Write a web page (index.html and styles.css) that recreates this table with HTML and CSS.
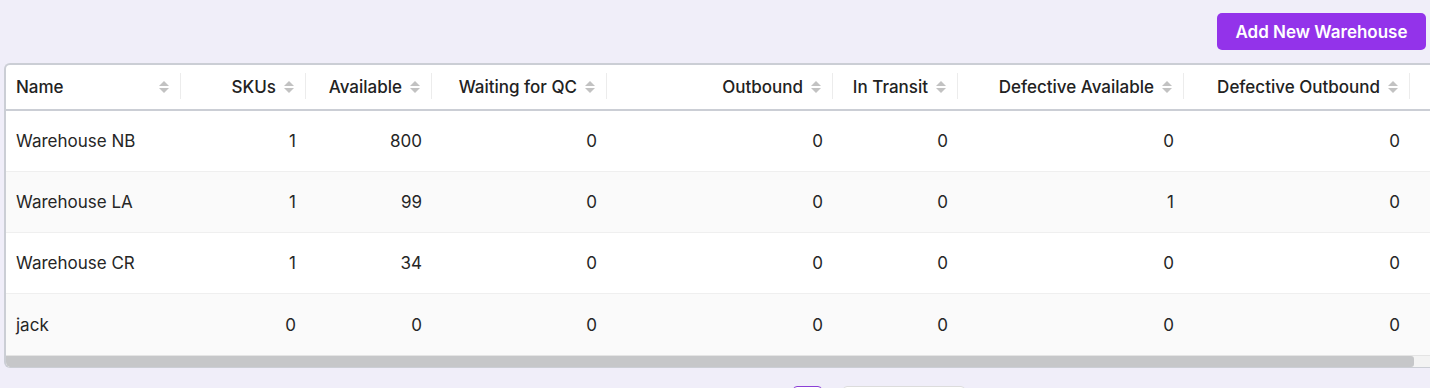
FILE: index.html
```html
<!DOCTYPE html>
<html lang="en">
<head>
<meta charset="utf-8">
<title>Warehouses</title>
<link rel="stylesheet" href="styles.css">
</head>
<body>
<div class="page">
  <div class="toolbar">
    <button class="btn-primary">Add New Warehouse</button>
  </div>
  <div class="table-card">
    <table class="grid">
      <colgroup>
        <col class="w175"><col class="w125"><col class="w126"><col class="w175"><col class="w226"><col class="w125"><col class="w226"><col class="w226"><col class="w200">
      </colgroup>
      <thead>
        <tr>
          <th class="left"><div class="th-in"><span class="lbl">Name</span><span class="sort"></span></div></th>
          <th><div class="th-in"><span class="lbl">SKUs</span><span class="sort"></span></div></th>
          <th><div class="th-in"><span class="lbl">Available</span><span class="sort"></span></div></th>
          <th><div class="th-in"><span class="lbl">Waiting for QC</span><span class="sort"></span></div></th>
          <th><div class="th-in"><span class="lbl">Outbound</span><span class="sort"></span></div></th>
          <th><div class="th-in"><span class="lbl">In Transit</span><span class="sort"></span></div></th>
          <th><div class="th-in"><span class="lbl">Defective Available</span><span class="sort"></span></div></th>
          <th><div class="th-in"><span class="lbl">Defective Outbound</span><span class="sort"></span></div></th>
          <th class="left"><div class="th-in"></div></th>
        </tr>
      </thead>
      <tbody>
        <tr><td class="left">Warehouse NB</td><td>1</td><td>800</td><td>0</td><td>0</td><td>0</td><td>0</td><td>0</td><td></td></tr>
        <tr class="alt"><td class="left">Warehouse LA</td><td>1</td><td>99</td><td>0</td><td>0</td><td>0</td><td>1</td><td>0</td><td></td></tr>
        <tr><td class="left">Warehouse CR</td><td>1</td><td>34</td><td>0</td><td>0</td><td>0</td><td>0</td><td>0</td><td></td></tr>
        <tr class="alt"><td class="left">jack</td><td>0</td><td>0</td><td>0</td><td>0</td><td>0</td><td>0</td><td>0</td><td></td></tr>
      </tbody>
    </table>
    <div class="hscroll"><div class="thumb"></div></div>
  </div>
  <div class="pager">
    <span class="page-active"></span>
    <span class="page-size"></span>
  </div>
</div>
</body>
</html>
```

FILE: styles.css
```css
html, body {
  margin: 0;
  padding: 0;
  background: #f0eef9;
  overflow: hidden;
}
body {
  font-family: Inter, "Liberation Sans", Arial, sans-serif;
  color: #222;
}
.page {
  width: 1430px;
  height: 388px;
  overflow: hidden;
}
.toolbar {
  display: flex;
  justify-content: flex-end;
  padding: 13px 4px 13px 0;
}
.btn-primary {
  width: 209px;
  height: 37px;
  border: none;
  border-radius: 5px;
  background: #9333ea;
  color: #fff;
  font-family: Inter, "Liberation Sans", Arial, sans-serif;
  font-size: 17px;
  font-weight: 600;
  cursor: pointer;
}
.table-card {
  margin-left: 4px;
  width: 1700px;
  background: #fff;
  border: 2px solid #cbced5;
  border-right: none;
  border-bottom: 1px solid #cbced5;
  border-radius: 6px 0 0 6px;
  overflow: hidden;
}
.grid {
  border-collapse: collapse;
  table-layout: fixed;
  width: 1604px;
  font-size: 17px;
}
.w175 { width: 175px; }
.w125 { width: 125px; }
.w126 { width: 126px; }
.w226 { width: 226px; }
.w200 { width: 200px; }
.grid th {
  height: 44px;
  padding: 0;
  font-weight: 450;
  color: #222;
  border-bottom: 2px solid #cbced5;
  position: relative;
  white-space: nowrap;
}
.grid th::after {
  content: "";
  position: absolute;
  right: 0;
  top: 8px;
  width: 1px;
  height: 26px;
  background: #ececec;
}
.th-in {
  display: flex;
  align-items: center;
  justify-content: flex-end;
  gap: 8px;
  padding: 0 12px 0 10px;
}
.grid th.left .th-in {
  justify-content: space-between;
}
.sort {
  display: inline-flex;
  flex-direction: column;
  align-items: center;
  gap: 2px;
  width: 10px;
}
.sort::before,
.sort::after {
  content: "";
  width: 0;
  height: 0;
  border-left: 5px solid transparent;
  border-right: 5px solid transparent;
}
.sort::before { border-bottom: 5px solid #c2c2c2; }
.sort::after { border-top: 5px solid #c2c2c2; }
.grid td {
  height: 60px;
  padding: 0 10px;
  text-align: right;
  color: #262626;
  border-bottom: 1px solid #efefef;
  white-space: nowrap;
}
.grid td.left { text-align: left; }
.grid tr.alt td { background: #fafafa; }
.grid tbody tr:last-child td { border-bottom: none; height: 61px; }
.hscroll {
  height: 11px;
  background: #f3f3f3;
  border-top: 1px solid #e4e4e4;
}
.thumb {
  width: 1408px;
  height: 11px;
  background: #c6c7c9;
  border-radius: 0 3px 3px 0;
}
.pager {
  display: flex;
  gap: 21px;
  padding: 18px 0 0 793px;
}
.page-active {
  width: 27px;
  height: 30px;
  border: 1px solid #8b3fd6;
  border-radius: 4px;
  background: #fff;
}
.page-size {
  width: 120px;
  height: 30px;
  border: 1px solid #dcdcdc;
  border-radius: 4px;
  background: #fff;
}
```
